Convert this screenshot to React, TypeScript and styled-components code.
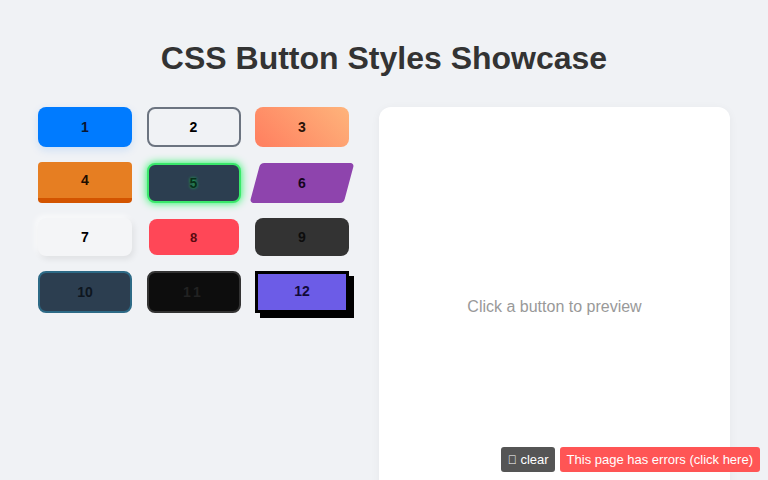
import React, { useState } from "react";
import styled, { createGlobalStyle, css } from "styled-components";

const GlobalStyle = createGlobalStyle`
  body {
    margin: 0;
    background: #f0f2f5;
    font-family: "Liberation Sans", Arial, sans-serif;
  }
`;

const Page = styled.div`
  padding-top: 40px;
`;

const Title = styled.h1`
  margin: 0 0 30px;
  text-align: center;
  font-size: 32px;
  line-height: 37px;
  font-weight: bold;
  color: #333;
`;

const Main = styled.div`
  display: flex;
  align-items: flex-start;
  gap: 30px;
  padding: 0 38px;
`;

const ButtonGrid = styled.div`
  display: grid;
  grid-template-columns: repeat(3, 94px);
  grid-auto-rows: auto;
  column-gap: 14.5px;
  row-gap: 15px;
  align-items: center;
  justify-items: center;
`;

type Variant =
  | "primary" | "outline" | "gradient" | "raised" | "neon" | "skew"
  | "soft" | "danger" | "dark" | "bordered" | "spaced" | "brutal";

const variants: Record<Variant, ReturnType<typeof css>> = {
  primary: css`
    height: 40px;
    background: #007bff;
    border-radius: 8px;
    color: #0a1630;
    box-shadow: 0 3px 8px rgba(0, 123, 255, 0.15);
  `,
  outline: css`
    height: 40px;
    background: transparent;
    border: 2px solid #6c7480;
    border-radius: 8px;
    color: #000;
  `,
  gradient: css`
    height: 40px;
    background: linear-gradient(45deg, #ff7e5f, #feb47b);
    border-radius: 8px;
    color: #2a1208;
  `,
  raised: css`
    height: 41px;
    background: #e67e22;
    border-bottom: 5px solid #d35400;
    border-radius: 4px;
    color: #1e0d00;
    padding-bottom: 0;
  `,
  neon: css`
    height: 40px;
    background: #2c3e50;
    border: 2px solid #39e86a;
    border-radius: 8px;
    color: #07301a;
    text-shadow: 0 0 3px #1fbf55;
    box-shadow: 0 0 8px #16f55a;
  `,
  skew: css`
    height: 40px;
    background: #8e44ad;
    border-radius: 4px;
    color: #16051e;
    transform: skewX(-15deg);
    & > span {
      display: inline-block;
      transform: skewX(15deg);
    }
  `,
  soft: css`
    height: 38px;
    background: #f4f5f7;
    border-radius: 8px;
    color: #000;
    box-shadow: 2px 3px 6px rgba(0, 0, 0, 0.08), -2px -2px 6px rgba(255, 255, 255, 0.8);
  `,
  danger: css`
    height: 36px;
    width: 90px;
    background: #ff4757;
    border-radius: 8px;
    color: #5a0a10;
    font-size: 13px;
  `,
  dark: css`
    height: 38px;
    background: #333;
    border-radius: 8px;
    color: #0d0d0d;
  `,
  bordered: css`
    height: 42px;
    background: #2c3e50;
    border: 2px solid #2d6a86;
    border-radius: 8px;
    color: #0e1620;
  `,
  spaced: css`
    height: 42px;
    background: #0d0d0d;
    border: 2px solid #333;
    border-radius: 8px;
    color: #222;
    letter-spacing: 3px;
  `,
  brutal: css`
    height: 42px;
    background: #6c5ce7;
    border: 3px solid #000;
    border-radius: 0;
    color: #120a3a;
    box-shadow: 5px 5px 0 #000;
    padding-bottom: 2px;
  `,
};

const StyleButton = styled.button<{ $variant: Variant }>`
  box-sizing: border-box;
  width: 94px;
  padding: 0;
  border: none;
  font-family: "Liberation Sans", Arial, sans-serif;
  font-size: 14px;
  font-weight: bold;
  cursor: pointer;
  ${(p) => variants[p.$variant]}
`;

const Preview = styled.div`
  box-sizing: border-box;
  width: 351px;
  height: 400px;
  background: #fff;
  border-radius: 12px;
  box-shadow: 0 2px 10px rgba(0, 0, 0, 0.05);
  display: flex;
  align-items: center;
  justify-content: center;
  font-size: 16px;
  color: #999;
`;

const ErrorBar = styled.div`
  position: fixed;
  right: 8px;
  bottom: 8px;
  display: flex;
  gap: 5px;
  font-family: "Liberation Sans", Arial, sans-serif;
  font-size: 13px;
`;

const ErrorChip = styled.div<{ $tone: "grey" | "red" }>`
  height: 25px;
  line-height: 25px;
  padding: 0 ${(p) => (p.$tone === "grey" ? "6px 0 7px" : "7px")};
  border-radius: 3px;
  color: #fff;
  background: ${(p) => (p.$tone === "grey" ? "#555" : "#f55")};
`;

const Glyph = styled.span`
  font-size: 12px;
`;

const buttons: { label: string; variant: Variant }[] = [
  { label: "1", variant: "primary" },
  { label: "2", variant: "outline" },
  { label: "3", variant: "gradient" },
  { label: "4", variant: "raised" },
  { label: "5", variant: "neon" },
  { label: "6", variant: "skew" },
  { label: "7", variant: "soft" },
  { label: "8", variant: "danger" },
  { label: "9", variant: "dark" },
  { label: "10", variant: "bordered" },
  { label: "11", variant: "spaced" },
  { label: "12", variant: "brutal" },
];

export default function App() {
  const [selected, setSelected] = useState<string | null>(null);

  return (
    <Page>
      <GlobalStyle />
      <Title>CSS Button Styles Showcase</Title>
      <Main>
        <ButtonGrid>
          {buttons.map((b) => (
            <StyleButton key={b.label} $variant={b.variant} onClick={() => setSelected(b.label)}>
              <span>{b.label}</span>
            </StyleButton>
          ))}
        </ButtonGrid>
        <Preview>{selected ? `Button ${selected}` : "Click a button to preview"}</Preview>
      </Main>
      <ErrorBar>
        <ErrorChip $tone="grey">
          <Glyph>{"\uf1f8"}</Glyph> clear
        </ErrorChip>
        <ErrorChip $tone="red">This page has errors (click here)</ErrorChip>
      </ErrorBar>
    </Page>
  );
}
